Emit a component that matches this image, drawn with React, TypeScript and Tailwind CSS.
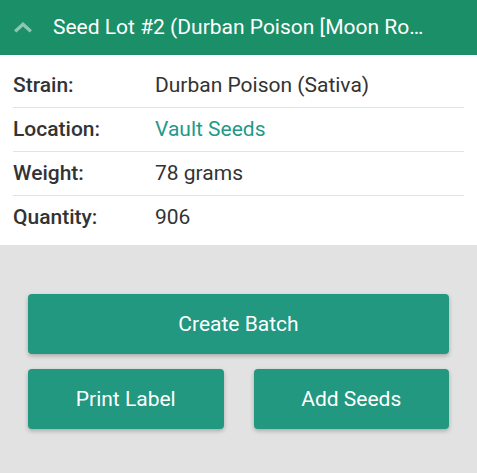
import React from "react";

const rows: { label: string; value: string; link?: boolean }[] = [
  { label: "Strain:", value: "Durban Poison (Sativa)" },
  { label: "Location:", value: "Vault Seeds", link: true },
  { label: "Weight:", value: "78 grams" },
  { label: "Quantity:", value: "906" },
];

export default function App() {
  return (
    <div className="w-[477px] h-[473px] bg-[#e2e2e2] flex flex-col" style={{ fontFamily: "Roboto, 'Liberation Sans', sans-serif" }}>
      <div className="h-[55px] bg-[#1a8f68] flex items-center pl-[14px] pr-[52px] shrink-0">
        <svg width="18" height="11" viewBox="0 0 18 11" className="shrink-0">
          <path d="M0 8.2 L9 0 L18 8.2 L15.6 10.6 L9 4.6 L2.4 10.6 Z" fill="#ffffff" fillOpacity="0.5" />
        </svg>
        <div className="ml-[21px] text-white text-[21px] truncate whitespace-nowrap overflow-hidden">
          Seed Lot #2 (Durban Poison [Moon Rocks])
        </div>
      </div>
      <div className="bg-white pt-[9px] pb-[5px] px-[13px] shrink-0">
        {rows.map((r, i) => (
          <div
            key={r.label}
            className={`flex items-center h-[44px] ${i < rows.length - 1 ? "border-b border-[#e3e3e3]" : ""}`}
          >
            <div className="w-[142px] text-[21px] font-medium text-[#333333]">{r.label}</div>
            <div className={`text-[21px] ${r.link ? "text-[#23998a]" : "text-[#333333]"}`}>{r.value}</div>
          </div>
        ))}
      </div>
      <div className="px-[28px] pt-[49px] flex flex-col gap-[15px]">
        <button className="h-[60px] pt-[2px] rounded-[4px] bg-[#21987f] text-white text-[21px] shadow-[0_2px_4px_rgba(0,0,0,0.25)]">
          Create Batch
        </button>
        <div className="flex gap-[30px]">
          <button className="flex-1 h-[60px] pt-[2px] rounded-[4px] bg-[#21987f] text-white text-[21px] shadow-[0_2px_4px_rgba(0,0,0,0.25)]">
            Print Label
          </button>
          <button className="flex-1 h-[60px] pt-[2px] rounded-[4px] bg-[#21987f] text-white text-[21px] shadow-[0_2px_4px_rgba(0,0,0,0.25)]">
            Add Seeds
          </button>
        </div>
      </div>
    </div>
  );
}
